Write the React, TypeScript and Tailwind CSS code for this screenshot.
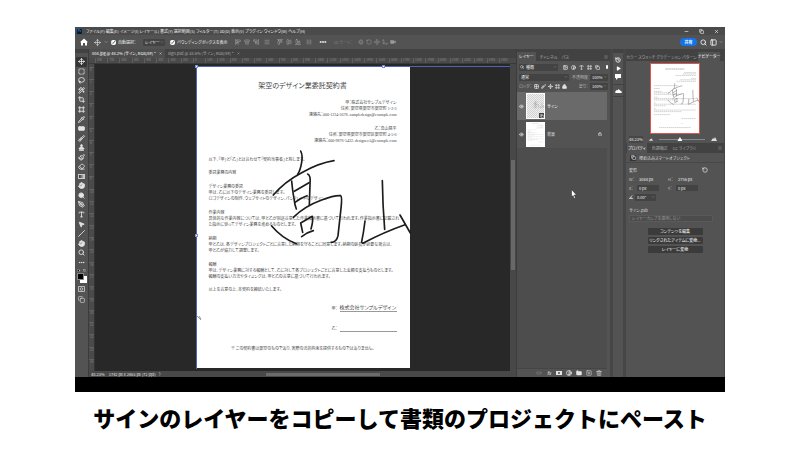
import type { ReactNode } from "react";
import {
  AlignCenterHorizontal,
  AlignCenterVertical,
  AlignEndHorizontal,
  AlignEndVertical,
  AlignStartHorizontal,
  AlignStartVertical,
  Bandage,
  Brush,
  ChevronDown,
  Circle,
  Contrast,
  Copy,
  Crop,
  Ellipsis,
  Eraser,
  Eye,
  Folder,
  Frame,
  Grid2x2,
  Hand,
  History,
  Image,
  Lasso,
  Link2,
  Lock,
  Menu,
  Minus,
  MousePointer2,
  Move,
  Move3d,
  Paintbrush,
  PanelLeft,
  PenTool,
  Pipette,
  Play,
  Rotate3d,
  RotateCcw,
  Search,
  Slash,
  SquareDashed,
  SquarePlus,
  Stamp,
  Trash2,
  Type,
  Video,
  WandSparkles,
  X,
  type LucideIcon,
} from "lucide-react";

const MENUS = [
  "ファイル(F)",
  "編集(E)",
  "イメージ(I)",
  "レイヤー(L)",
  "書式(Y)",
  "選択範囲(S)",
  "フィルター(T)",
  "3D(D)",
  "表示(V)",
  "プラグイン",
  "ウィンドウ(W)",
  "ヘルプ(H)",
];

const TOOLS: { name: string; icon?: LucideIcon; solid?: boolean }[] = [
  { name: "移動", icon: Move },
  { name: "長方形選択", icon: SquareDashed },
  { name: "なげなわ", icon: Lasso },
  { name: "クイック選択", icon: WandSparkles },
  { name: "切り抜き", icon: Crop },
  { name: "フレーム", icon: Frame },
  { name: "スポイト", icon: Pipette },
  { name: "修復ブラシ", icon: Bandage, solid: true },
  { name: "ブラシ", icon: Brush },
  { name: "スタンプ", icon: Stamp, solid: true },
  { name: "ヒストリーブラシ", icon: Paintbrush },
  { name: "消しゴム", icon: Eraser },
  { name: "グラデーション" },
  { name: "指先", icon: Hand, solid: true },
  { name: "覆い焼き", icon: Search, solid: true },
  { name: "ペン", icon: PenTool },
  { name: "文字", icon: Type },
  { name: "パス選択", icon: MousePointer2, solid: true },
  { name: "ライン", icon: Slash },
  { name: "手のひら", icon: Hand, solid: true },
  { name: "ズーム", icon: Search },
  { name: "その他", icon: Ellipsis },
];

const PARTIES = [
  ["甲：株式会社サンプルデザイン", "住所：架空県架空市架空町 1-2-3", "連絡先：000-1234-5678、sampledesign@example.com"],
  ["乙：高山晃平", "住所：架空県架空市架空区架空町 4-5-6", "連絡先：000-9876-5432、designerA@example.com"],
];

const CLAUSES = [
  {
    title: "デザイン業務の委託",
    lines: ["甲は、乙に以下のデザイン業務を委託します。", "ロゴデザインの制作、ウェブサイトのデザイン、パンフレットのデザイン。"],
  },
  {
    title: "作業内容",
    lines: [
      "具体的な作業内容については、甲と乙が別途合意した作業指示書に基づいて行われます。作業指示書に記載され",
      "た指示に従ってデザイン業務を進めるものとします。",
    ],
  },
  {
    title: "納期",
    lines: ["甲と乙は、各デザインプロジェクトごとに合意した納期を守ることに同意します。納期の延長が必要な場合は、", "甲と乙が協力して調整します。"],
  },
  {
    title: "報酬",
    lines: [
      "甲は、デザイン業務に対する報酬として、乙に対して各プロジェクトごとに合意した金額を支払うものとします。",
      "報酬の支払い方法やタイミングは、甲と乙の合意に基づいて行われます。",
    ],
  },
];

const H_TICKS = Array.from({ length: 34 }, (_, i) => Math.abs(i - 8) * 100);
const V_TICKS = Array.from({ length: 25 }, (_, i) => i);

function IconButton({ label, children, className = "" }: { label: string; children: ReactNode; className?: string }) {
  return (
    <button type="button" aria-label={label} className={`flex shrink-0 items-center justify-center ${className}`}>
      {children}
    </button>
  );
}

function Drop({ label, value, className = "" }: { label: string; value: string; className?: string }) {
  return (
    <span className={`flex h-[7px] items-center rounded-[1px] bg-[#434343] pr-px pl-[2px] ${className}`}>
      <select aria-label={label} className="w-full min-w-0 appearance-none bg-transparent leading-[7px] text-[#f0f0f0]">
        <option>{value}</option>
      </select>
      <ChevronDown size={4} className="shrink-0 text-[#aaa]" />
    </span>
  );
}

function Field({ id, label, value, boxed }: { id: string; label: string; value: string; boxed?: boolean }) {
  return (
    <span className="flex h-[7px] w-[34px] items-center gap-[2px]">
      <label htmlFor={id} className="w-[6px] shrink-0 whitespace-nowrap text-[#ccc]">{label}</label>
      <input
        id={id}
        defaultValue={value}
        className={`h-[6px] w-[22px] min-w-0 px-[2px] leading-[6px] text-[#eee] ${boxed ? "bg-[#434343]" : "bg-transparent"}`}
      />
    </span>
  );
}

function Signature({ stroke = 5, className = "" }: { stroke?: number; className?: string }) {
  return (
    <svg
      viewBox="3 -234 642 903"
      className={`absolute inset-0 size-full overflow-visible ${className}`}
      fill="none"
      stroke="currentColor"
      strokeWidth={stroke}
      strokeLinecap="round"
      strokeLinejoin="round"
    >
      <path d="M317 18Q324 32 320 52Q316 76 308 88" />
      <path d="M235 150C258 122 288 100 320 83Q372 54 417 47" />
      <path d="M290 108Q293 140 297 160Q299 180 304 192" />
      <path d="M338 87Q348 91 345 118L343 180" />
      <path d="M298 139L342 113M300 172Q318 158 336 152" />
      <path d="M295 217Q330 183 380 165Q420 150 437 152Q442 155 438 190L429 272Q425 292 408 292" />
      <path d="M323 262L317 234L352 214Q355 228 348 252M320 275Q336 262 355 257" />
      <path d="M230 243Q262 281 304 296" />
      <path d="M562 107Q563 180 569 253" />
      <path d="M510 228Q506 262 500 290Q500 298 511 291Q565 262 630 239M615 210L646 264" />
    </svg>
  );
}

function Contract() {
  return (
    <article className="relative flex min-h-[301px] w-[214px] shrink-0 flex-col bg-white px-[13px] pt-[15px] text-[4px] leading-[6px] whitespace-nowrap text-[#444] font-['Liberation_Serif','Noto_Sans_CJK_JP',serif]">
      <h1 className="text-center text-[7px] leading-[8px]">架空のデザイン業委託契約書</h1>
      <div className="mt-[9px] flex flex-col gap-[7px] text-right">
        {PARTIES.map((lines) => (
          <div key={lines[0]}>
            {lines.map((line, i) => (
              <p key={i} className={i === 0 ? "leading-[7px]" : ""}>{line}</p>
            ))}
          </div>
        ))}
      </div>
      <div className="mt-[13px] flex flex-col gap-[7px]">
        <p>以下、「甲」と「乙」とは合わせて「契約当事者」と称します。</p>
        <p>委託業務の内容</p>
        {CLAUSES.map((clause) => (
          <section key={clause.title}>
            <h2 className="leading-[7px]">{clause.title}</h2>
            {clause.lines.map((line) => (
              <p key={line}>{line}</p>
            ))}
          </section>
        ))}
        <p>以上を合意の上、本契約を締結いたします。</p>
      </div>
      <div className="mt-[11px] flex flex-col gap-[13px] self-end">
        <p className="flex items-end gap-[2px]">
          甲：<span className="w-[57px] border-b border-[#999] text-[5px] leading-[7px]">株式会社サンプルデザイン</span>
        </p>
        <p className="flex items-end gap-[2px]">
          乙：<span className="h-[7px] w-[57px] border-b border-[#999]" />
        </p>
      </div>
      <p className="mt-[14px] text-center">※ この契約書は架空のものであり、実際の法的拘束を提供するものではありません。</p>

      <Signature className="text-[#1c1c1c]" />
      {/* transform box of the pasted layer */}
      <div className="absolute -inset-y-px left-0 w-[314px] border-t border-l border-[#4a66b5]">
        <span className="absolute -top-[2px] -left-[2px] size-[3px] border border-[#7d93cf] bg-white" />
        <span className="absolute -top-[2px] left-[185px] size-[3px] border border-[#7d93cf] bg-white" />
        <span className="absolute top-[167px] -left-[2px] size-[3px] border border-[#7d93cf] bg-white" />
      </div>
      <svg viewBox="0 0 5 5" className="absolute top-[248px] left-px size-[5px]" stroke="#999" strokeWidth="1">
        <path d="M0 1L4 5M2 1L4 4" />
      </svg>
    </article>
  );
}

function DocumentLines() {
  return (
    <svg viewBox="0 0 214 301" className="absolute inset-0 size-full" stroke="#bdbdbd" strokeWidth="3" strokeDasharray="7 2">
      <path stroke="#888" d="M64 19H149" />
      <path d="M148 35H201M142 41H201M110 48H201M179 61H201M130 67H201M115 74H201" />
      <path d="M13 93H120M13 106H40M13 119H46M13 125H88M13 132H136M13 145H30M13 151H201M13 157H102M13 170H21M13 176H201M13 183H65M13 196H21M13 202H201M13 209H136M13 222H86" />
      <path d="M136 240H201M136 262H140M35 280H179" />
    </svg>
  );
}

function OptionsBar() {
  return (
    <div className="flex h-[14px] items-center bg-[#535353] whitespace-nowrap text-[#eee]">
      <IconButton label="ホーム" className="ml-[5px] text-white">
        <svg viewBox="0 0 8 8" className="size-[8px]" fill="currentColor"><path d="M4 .5L8 4.200H7V7.500H5V5H3V7.500H1V4.200H0Z" /></svg>
      </IconButton>
      <Move size={7} strokeWidth={2} className="ml-[6px]" />
      <ChevronDown size={4} className="ml-[3px]" />
      <label className="ml-[3px] flex items-center gap-[2px]">
        <input type="checkbox" defaultChecked className="size-[5px] accent-white" />自動選択：
      </label>
      <Drop label="自動選択の対象" value="レイヤー" className="ml-[7px] w-[22px]" />
      <label className="ml-[5px] flex items-center gap-[2px]">
        <input type="checkbox" defaultChecked className="size-[5px] accent-white" />バウンディングボックスを表示
      </label>
      <div className="ml-[8px] flex items-center gap-[3px] text-[#aaa]">
        <AlignStartVertical size={6} />
        <AlignCenterVertical size={6} />
        <AlignEndVertical size={6} />
        <Menu size={6} className="ml-[2px]" />
        <AlignStartHorizontal size={6} className="ml-[4px]" />
        <AlignCenterHorizontal size={6} />
        <AlignEndHorizontal size={6} />
        <Menu size={6} className="ml-[2px] rotate-90" />
      </div>
      <IconButton label="整列と分布" className="ml-[7px]"><Ellipsis size={8} strokeWidth={4} /></IconButton>
      <span className="ml-[6px] text-[#7c7c7c]">3D モード：</span>
      <div className="ml-[6px] flex items-center gap-[2px] text-[#999]">
        <Rotate3d size={6} />
        <RotateCcw size={6} />
        <Move size={6} />
        <Move3d size={6} />
        <Video size={6} fill="currentColor" />
      </div>
      <button type="button" className="ml-auto h-[8px] w-[17px] rounded-full bg-[#1473e6] leading-[8px] font-bold text-white">共有</button>
      <IconButton label="検索" className="ml-[3px]"><Search size={7} strokeWidth={3} /></IconButton>
      <IconButton label="ワークスペース" className="ml-[3px]"><PanelLeft size={7} strokeWidth={3} /></IconButton>
      <ChevronDown size={4} className="mx-[2px]" />
    </div>
  );
}

function Toolbar() {
  return (
    <div className="flex w-[14px] shrink-0 flex-col items-center border-r border-[#3c3c3c] bg-[#535353] text-[#e4e4e4]">
      <div className="h-[4px] w-full bg-[#424242]" />
      <div className="mt-[4px] flex h-[210px] w-full flex-col items-center">
        {TOOLS.map(({ name, icon: Icon, solid }, i) => (
          <IconButton key={name} label={name} className={i === 0 ? "w-[11px] flex-1 rounded-[1px] bg-[#353535]" : "w-[11px] flex-1"}>
            {Icon ? (
              <Icon size={7} strokeWidth={3} fill={solid ? "currentColor" : "none"} />
            ) : (
              <span className="h-[5px] w-[7px] border border-[#ccc] bg-linear-to-r from-[#333] to-[#ccc]" />
            )}
          </IconButton>
        ))}
      </div>
      <div className="mt-[2px] flex w-full justify-between px-[2px]">
        <Circle size={3} strokeWidth={4} fill="black" />
        <RotateCcw size={3} strokeWidth={3} />
      </div>
      <div className="relative mt-px size-[10px]">
        <span className="absolute right-0 bottom-0 size-[7px] bg-white" />
        <span className="absolute top-0 left-0 size-[7px] border border-[#888] bg-black" />
      </div>
      <IconButton label="クイックマスク" className="mt-[3px]">
        <svg viewBox="0 0 7 6" className="h-[6px] w-[7px]" fill="none" stroke="currentColor" strokeWidth=".7"><path d="M.5 .5H6.500V5.500H.5Z" /><circle cx="3.500" cy="3" r="1.300" /></svg>
      </IconButton>
      <IconButton label="スクリーンモード" className="mt-[4px]"><Copy size={7} /></IconButton>
    </div>
  );
}

function Workspace() {
  return (
    <main className="flex min-w-0 flex-1 flex-col">
      <div className="flex h-[9px] items-center bg-[#424242] whitespace-nowrap">
        <button type="button" className="flex h-full items-center gap-[3px] bg-[#4e4e4e] px-[3px] leading-[9px] text-white">
          004.jpg @ 48.2% (サイン, RGB/8#) *<X size={3} strokeWidth={3} />
        </button>
        <button type="button" className="flex h-full items-center gap-[3px] px-[3px] leading-[9px] text-[#aaa]">
          sign.psd @ 38.6% (サイン, RGB/8#) *<X size={3} strokeWidth={3} />
        </button>
      </div>
      <div className="flex h-[6px] border-b border-[#3a3a3a] bg-[#4a4a4a] pr-[5px] pl-[6px] text-[3px] leading-[5px] text-[#858585]">
        {H_TICKS.map((n, i) => (
          <span key={i} className="min-w-0 flex-1 border-l border-[#606060] pl-px">{n}</span>
        ))}
      </div>
      <div className="flex flex-1">
        <div className="flex w-[6px] shrink-0 flex-col border-r border-[#333] bg-[#4a4a4a] pt-[3px] text-[3px] leading-[4px] text-[#858585]">
          {V_TICKS.map((n) => (
            <span key={n} className="min-h-0 flex-1 border-t border-[#606060] pl-px">{n}</span>
          ))}
        </div>
        <div className="flex min-w-0 flex-1 items-center justify-center overflow-hidden bg-[#282828] py-[3px]">
          <Contract />
        </div>
        <div className="flex w-[6px] shrink-0 flex-col items-center bg-[#484848] pt-[96px]">
          <div className="h-[110px] w-[4px] bg-[#686868]" />
        </div>
      </div>
      <div className="flex h-[6px] items-center bg-[#484848] leading-[6px] whitespace-nowrap text-[#e4e4e4]">
        <span className="ml-[2px]">48.23%</span>
        <span className="ml-[4px]">1742 px x 2463 px (72 ppi)</span>
        <span className="ml-[3px]">〉</span>
        <div className="mr-[136px] ml-auto h-[3px] w-[114px] bg-[#6b6b6b]" />
      </div>
    </main>
  );
}

function LayersPanel() {
  return (
    <aside className="flex w-[94px] shrink-0 flex-col border-l border-[#3c3c3c] bg-[#535353] text-[#e4e4e4]">
      <div className="h-[3px] bg-[#424242]" />
      <div className="flex h-[9px] items-center gap-[4px] bg-[#424242] pr-[2px] text-[#aaa]">
        <button type="button" className="h-full bg-[#535353] px-[2px] leading-[9px] text-white">レイヤー</button>
        <button type="button">チャンネル</button>
        <button type="button">パス</button>
        <Menu size={4} className="ml-auto" />
      </div>
      <div className="mt-[2px] flex h-[8px] items-center px-[2px]">
        <span className="flex h-[7px] w-[39px] items-center bg-[#434343] pl-px">
          <Search size={4} strokeWidth={3} className="shrink-0" />
          <Drop label="フィルターの種類" value="種類" className="flex-1" />
        </span>
        <div className="ml-auto flex items-center gap-[3px]">
          <Image size={5} strokeWidth={3} />
          <Contrast size={5} strokeWidth={3} />
          <Type size={5} strokeWidth={3} />
          <Frame size={5} strokeWidth={3} />
          <Copy size={5} strokeWidth={3} />
          <span className="ml-[3px] h-[4px] w-[2px] rounded-full bg-white" />
        </div>
      </div>
      <div className="mt-[2px] flex h-[8px] items-center px-[2px] whitespace-nowrap">
        <Drop label="描画モード" value="通常" className="w-[50px]" />
        <span className="ml-auto text-[#bbb]">不透明度：</span>
        <Drop label="不透明度" value="100%" className="w-[18px]" />
      </div>
      <div className="mt-px flex h-[8px] items-center gap-[2px] px-[2px] whitespace-nowrap">
        <span className="text-[#bbb]">ロック：</span>
        <Grid2x2 size={5} strokeWidth={3} />
        <Brush size={5} strokeWidth={3} />
        <Move size={5} strokeWidth={3} />
        <Frame size={5} strokeWidth={3} />
        <Lock size={5} strokeWidth={3} fill="currentColor" />
        <span className="ml-auto text-[#bbb]">塗り：</span>
        <Drop label="塗り" value="100%" className="w-[18px]" />
      </div>
      <div className="mt-[2px] mr-[3px] flex-1 bg-[#4d4d4d]">
        <div className="flex h-[28px] items-center bg-[#6a6a6a]">
          <IconButton label="サインの表示" className="w-[9px]"><Eye size={5} strokeWidth={3} /></IconButton>
          <div className="relative h-[26px] w-[19px] border border-white bg-[repeating-conic-gradient(#d2d2d2_0_25%,#f0f0f0_0_50%)] bg-[length:2px_2px]">
            <Signature stroke={14} className="text-[#999]" />
            <span className="absolute right-0 bottom-0 flex size-[5px] items-center justify-center bg-[#444]"><Copy size={4} strokeWidth={3} /></span>
          </div>
          <span className="ml-[2px] text-white">サイン</span>
        </div>
        <div className="flex h-[28px] items-center bg-[#535353]">
          <IconButton label="背景の表示" className="w-[9px]"><Eye size={5} strokeWidth={3} /></IconButton>
          <div className="relative h-[25px] w-[19px] bg-white"><DocumentLines /></div>
          <span className="ml-[2px]">背景</span>
          <Lock size={4} strokeWidth={3} className="mr-[5px] ml-auto" />
        </div>
      </div>
      <div className="mr-[3px] flex h-[9px] items-center gap-[4px] border-t border-[#454545] pr-[5px]">
        <Link2 size={6} className="ml-auto text-[#888]" />
        <button type="button" aria-label="レイヤースタイル" className="w-[6px] text-[5px] leading-[8px] italic">fx</button>
        <IconButton label="マスクを追加">
          <svg viewBox="0 0 6 6" className="size-[6px]"><path fill="currentColor" fillRule="evenodd" d="M0 1H6V5H0ZM3 2A1 1 0 1 0 3 4A1 1 0 1 0 3 2Z" /></svg>
        </IconButton>
        <IconButton label="調整レイヤー"><Contrast size={6} strokeWidth={3} /></IconButton>
        <IconButton label="新規グループ"><Folder size={6} fill="currentColor" /></IconButton>
        <IconButton label="新規レイヤー"><SquarePlus size={6} /></IconButton>
        <IconButton label="レイヤーを削除"><Trash2 size={6} /></IconButton>
      </div>
    </aside>
  );
}

function IconStrip() {
  return (
    <div className="flex w-[16px] shrink-0 flex-col border-x-[3px] border-[#464646] bg-[#535353] text-white">
      <div className="h-[4px] bg-[#424242]" />
      <div className="flex flex-col items-center gap-[3px] border-b border-[#424242] pt-[4px] pb-[4px]">
        <IconButton label="ヒストリー"><History size={6} strokeWidth={3} /></IconButton>
        <IconButton label="アクション"><Play size={5} fill="currentColor" /></IconButton>
        <IconButton label="コメント">
          <svg viewBox="0 0 6 6" className="size-[6px]" fill="currentColor"><path d="M0 0H6V4H3L1 6V4H0Z" /></svg>
        </IconButton>
      </div>
      <IconButton label="ブラシ設定" className="h-[12px] border-b border-[#424242]">
        <svg viewBox="0 0 8 5" className="h-[4px] w-[7px]" fill="currentColor"><path d="M0 5V3L2 1L3 2L4 0L6 2L8 3V5Z" /></svg>
      </IconButton>
    </div>
  );
}

function SidePanels() {
  return (
    <aside className="flex w-[99px] shrink-0 flex-col border-r border-[#464646] bg-[#535353] text-[#ddd]">
      <div className="h-[3px] bg-[#424242]" />
      <div className="flex h-[9px] items-center gap-px bg-[#424242] whitespace-nowrap text-[#aaa]">
        <button type="button">カラー</button>
        <button type="button">スウォッチ</button>
        <button type="button">グラデーション</button>
        <button type="button">パターン</button>
        <button type="button" className="h-full bg-[#535353] leading-[9px] text-white">ナビゲーター</button>
      </div>
      <div className="flex justify-center pt-[2px]">
        <div className="relative h-[71px] w-[50px] border border-[#e0564b] bg-white">
          <DocumentLines />
          <Signature stroke={6} className="text-[#555]" />
        </div>
      </div>
      <div className="mt-px flex h-[8px] items-center gap-[6px] px-[3px] text-[#eee]">
        <span className="w-[14px] bg-[#474747] leading-[7px]">48.23%</span>
        <svg viewBox="0 0 6 4" className="h-[3px] w-[4px]" fill="#ddd"><path d="M0 4L2 1L3 2L4 0L6 4Z" /></svg>
        <input
          type="range"
          aria-label="表示倍率"
          defaultValue={45}
          className="h-[5px] min-w-0 flex-1 appearance-none bg-[linear-gradient(#888,#888)] bg-[length:100%_1px] bg-center bg-no-repeat [&::-webkit-slider-thumb]:h-[4px] [&::-webkit-slider-thumb]:w-[5px] [&::-webkit-slider-thumb]:appearance-none [&::-webkit-slider-thumb]:bg-white [&::-webkit-slider-thumb]:[clip-path:polygon(50%_0,100%_100%,0_100%)]"
        />
        <svg viewBox="0 0 6 4" className="mr-[4px] h-[4px] w-[6px]" fill="#ddd"><path d="M0 4L2 1L3 2L4 0L6 4Z" /></svg>
      </div>

      <div className="flex h-[10px] items-center gap-[5px] bg-[#424242] pr-[2px] pl-px whitespace-nowrap text-[#aaa]">
        <button type="button" className="h-full bg-[#535353] px-px leading-[10px] text-white">プロパティ</button>
        <button type="button">色調補正</button>
        <button type="button">CC ライブラリ</button>
        <Menu size={4} className="ml-auto" />
      </div>
      <div className="flex h-[10px] items-center gap-[3px] border-b border-[#484848] pl-[4px]">
        <span className="flex size-[6px] items-center justify-center bg-[#333]"><Copy size={5} strokeWidth={3} /></span>
        埋め込みスマートオブジェクト
      </div>
      <div className="flex flex-col gap-[2px] px-[3px] pt-[3px]">
        <div className="flex h-[7px] items-center justify-between pr-[13px]">
          変形
          <IconButton label="リセット"><RotateCcw size={6} strokeWidth={3} /></IconButton>
        </div>
        <div className="flex gap-[5px]">
          <Field id="w" label="W：" value="3044 px" />
          <Field id="h" label="H：" value="2756 px" />
        </div>
        <div className="flex gap-[5px]">
          <Field id="x" label="X：" value="0 px" boxed />
          <Field id="y" label="Y：" value="0 px" boxed />
        </div>
        <div className="flex h-[8px] items-center gap-[2px]">
          <svg viewBox="0 0 5 5" className="size-[4px]" fill="none" stroke="currentColor"><path d="M5 4.500H.5L4 .5M3 4.500Q3 3 2 2.500" /></svg>
          <Drop label="角度" value="0.00°" className="w-[21px]" />
        </div>
        <p className="mt-[4px] leading-[6px]">サイン.psb</p>
        <select aria-label="レイヤーカンプ" disabled className="mr-[8px] h-[7px] appearance-none border border-[#5a5a5a] bg-[#4c4c4c] px-[2px] leading-[5px] text-[#999]">
          <option>レイヤーカンプを適用しない</option>
        </select>
      </div>
      <div className="mt-[6px] flex flex-col items-center gap-[2px] text-white">
        {["コンテンツを編集", "リンクされたアイテムに変換...", "レイヤーに変換"].map((label) => (
          <button key={label} type="button" className="h-[7px] w-[55px] rounded-[1px] bg-[#3b3b3b] leading-[7px]">{label}</button>
        ))}
      </div>
    </aside>
  );
}

export default function App() {
  return (
    <div className="min-h-screen bg-white px-[75px] pt-[27px] font-['Noto_Sans_CJK_JP',sans-serif] [font-feature-settings:'palt']">
      <div className="relative bg-black pb-[15px] text-[4px] leading-[6px]">
        <header className="flex h-[8px] items-center bg-[#4b4b4b] text-[#eee]">
          <span className="ml-[2px] flex h-[5px] w-[5px] items-center justify-center rounded-[1px] bg-[#001e36] text-[3px] leading-[5px] text-[#31a8ff]">Ps</span>
          <nav className="ml-[4px] flex gap-px whitespace-nowrap">
            {MENUS.map((menu) => (
              <button key={menu} type="button">{menu}</button>
            ))}
          </nav>
          <div className="mr-[6px] ml-auto flex gap-[10px]">
            <IconButton label="最小化"><Minus size={5} strokeWidth={3} /></IconButton>
            <IconButton label="元に戻す"><Copy size={5} strokeWidth={3} /></IconButton>
            <IconButton label="閉じる"><X size={5} strokeWidth={3} /></IconButton>
          </div>
        </header>
        <OptionsBar />
        <div className="flex">
          <Toolbar />
          <Workspace />
          <LayersPanel />
          <IconStrip />
          <SidePanels />
        </div>
        <svg viewBox="0 0 6 10" className="absolute top-[162px] left-[496px] h-[10px] w-[6px]" fill="white" stroke="#222" strokeWidth=".5">
          <path d="M.5 .5V8L2 6.500L3.200 9.500L4.500 9L3.300 6H5.500Z" />
        </svg>
      </div>
      <p className="flex h-[50px] items-center justify-center text-[22px] leading-[32px] font-black whitespace-nowrap text-black [font-feature-settings:normal]">
        サインのレイヤーをコピーして書類のプロジェクトにペースト
      </p>
    </div>
  );
}
